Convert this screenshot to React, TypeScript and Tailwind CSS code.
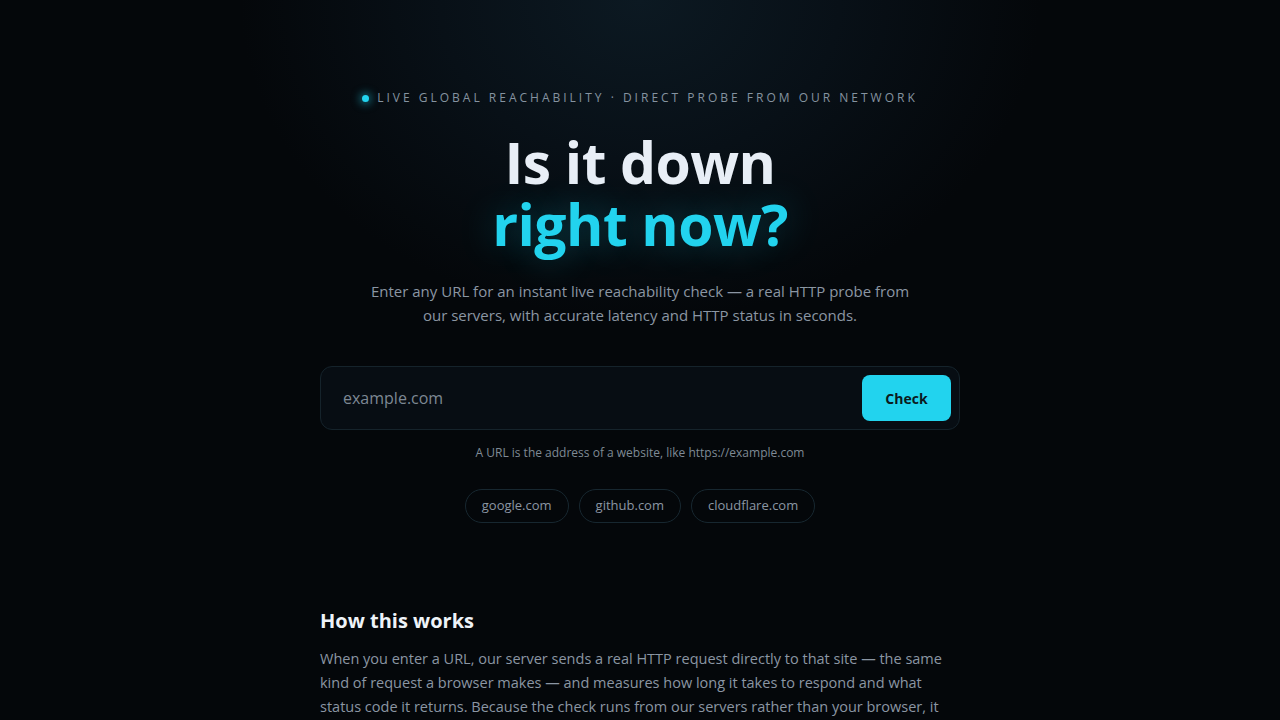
import { useState } from 'react'

const EXAMPLES = ['google.com', 'github.com', 'cloudflare.com']

export default function App() {
  const [url, setUrl] = useState('')

  return (
    <div
      className="min-h-screen bg-[#04070a] bg-[radial-gradient(ellipse_400px_320px_at_50%_0%,#0c1922_0%,#081017_50%,#04070a_100%)] text-[#e6edf5]"
      style={{ fontFamily: '"Open Sans", "Noto Sans", sans-serif' }}
    >
      <main className="mx-auto flex w-[640px] flex-col items-center pt-[89px]">
        <div className="flex items-center gap-2 text-[12px] leading-[18px] tracking-[0.25em] text-[#8593a0] uppercase">
          <span className="h-[7px] w-[7px] rounded-full bg-[#22d3ee] shadow-[0_0_8px_2px_rgba(34,211,238,0.5)]" />
          <span>Live global reachability · Direct probe from our network</span>
        </div>

        <h1 className="mt-[24px] text-center text-[57px] leading-[62px] font-bold tracking-[-0.01em]">
          <span className="block text-[#e8eef6]">Is it down</span>
          <span className="block text-[#22d3ee] [text-shadow:0_0_36px_rgba(34,211,238,0.3)]">right now?</span>
        </h1>

        <p className="mt-[24px] w-[560px] text-center text-[15px] leading-[24px] text-[#8b96a3]">
          Enter any URL for an instant live reachability check — a real HTTP probe from our servers, with accurate latency and HTTP status in seconds.
        </p>

        <form
          onSubmit={(e) => e.preventDefault()}
          className="mt-[39px] flex h-[64px] w-full items-center rounded-xl border border-[#15232b] bg-[#070d13] pr-[8px] pl-[22px]"
        >
          <input
            value={url}
            onChange={(e) => setUrl(e.target.value)}
            placeholder="example.com"
            className="flex-1 bg-transparent text-[16px] text-[#e6edf5] outline-none placeholder:text-[#7d8893]"
          />
          <button type="submit" className="h-[46px] w-[89px] rounded-lg bg-[#22d3ee] text-[14px] font-bold text-[#0b1a20]">
            Check
          </button>
        </form>

        <p className="mt-[14px] text-[12px] leading-[18px] text-[#7f8a95]">
          A URL is the address of a website, like https://example.com
        </p>

        <div className="mt-[27px] flex gap-[10px]">
          {EXAMPLES.map((d) => (
            <button
              key={d}
              onClick={() => setUrl(d)}
              className="h-[34px] rounded-full border border-[#172730] px-[16px] text-[13px] text-[#8b96a3]"
            >
              {d}
            </button>
          ))}
        </div>

        <section className="mt-[84px] w-full">
          <h2 className="text-[20px] leading-[28px] font-bold text-[#eef3f8]">How this works</h2>
          <p className="mt-[12px] text-[14.5px] leading-[24px] text-[#8b96a3]">
            When you enter a URL, our server sends a real HTTP request directly to that site — the same kind of request a browser makes — and measures how long it takes to respond and what status code it returns. Because the check runs from our servers rather than your browser, it isn’t affected by your local network, DNS cache or browser extensions.
          </p>
        </section>
      </main>
    </div>
  )
}
